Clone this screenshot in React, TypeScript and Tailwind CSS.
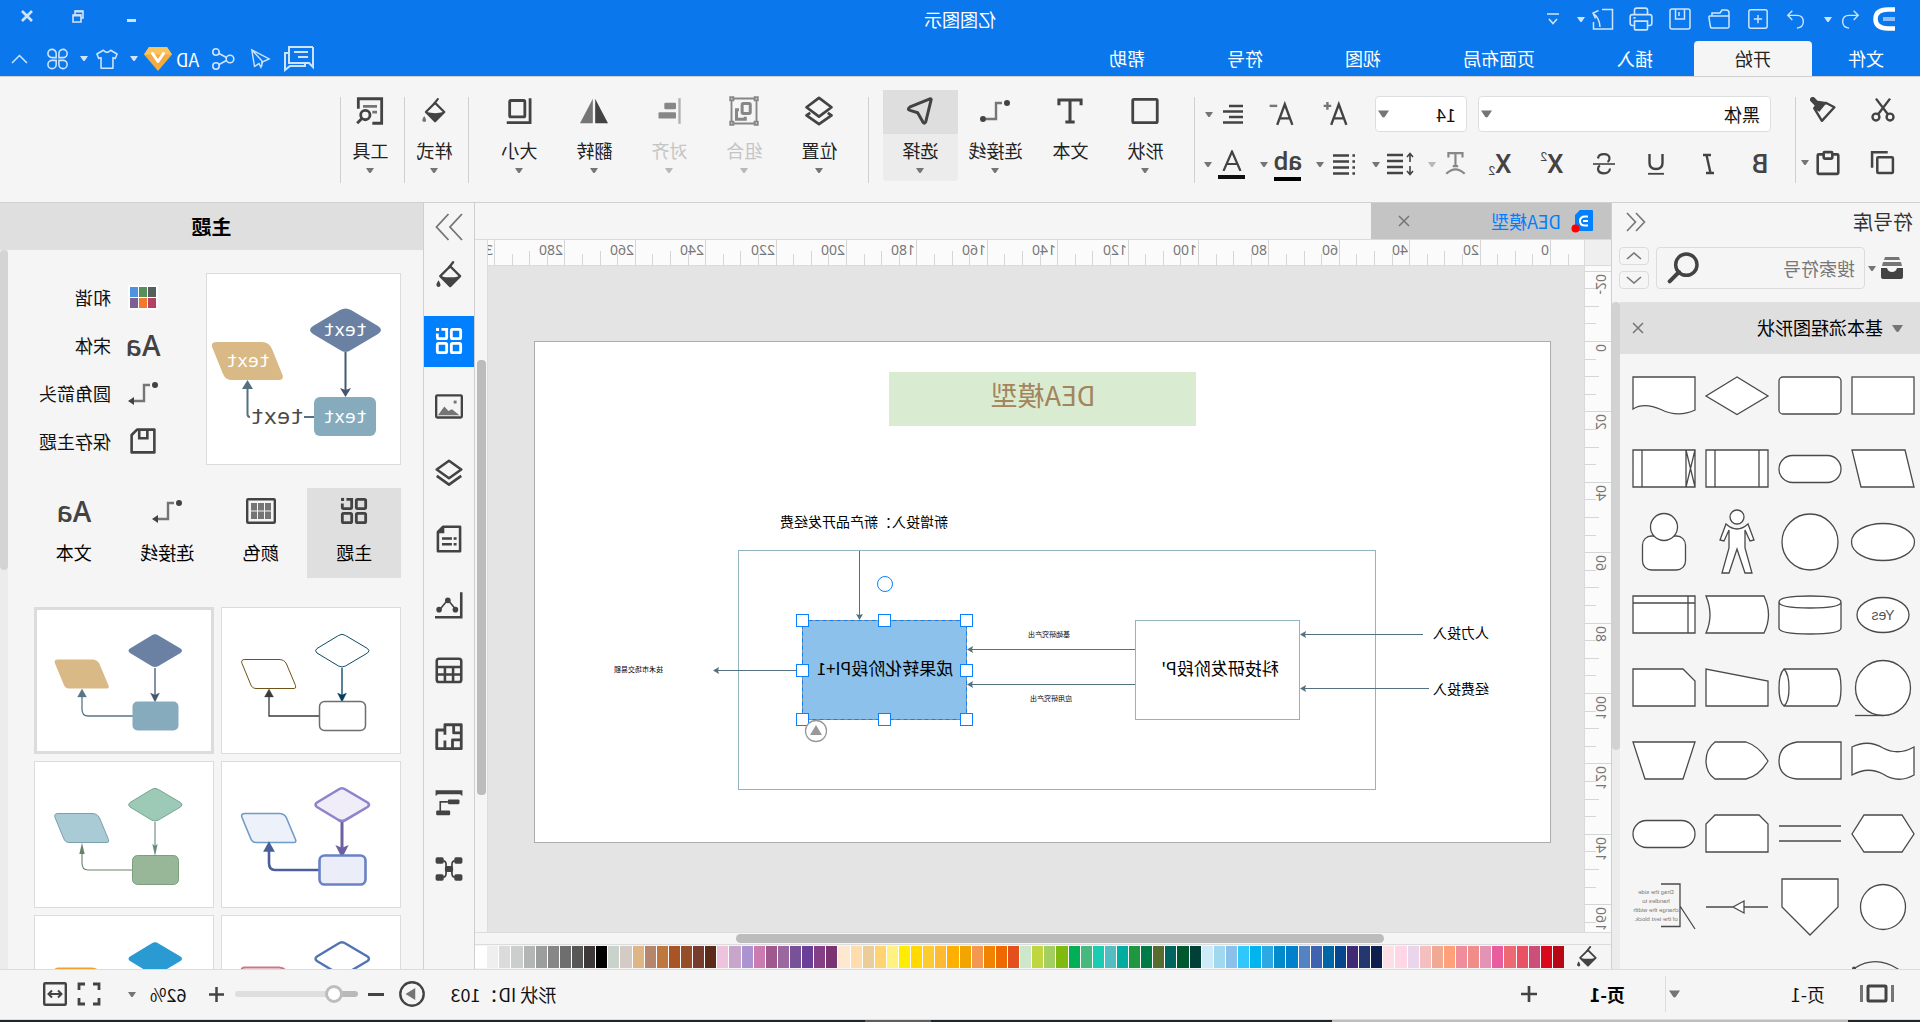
import React from "react";

type Kids = { children?: React.ReactNode };

/* ---------- primitives ---------- */

function Icon({
  size = 24,
  sw = 2,
  children,
  className = "",
}: Kids & { size?: number; sw?: number; className?: string }) {
  return (
    <svg
      width={size}
      height={size}
      viewBox="0 0 24 24"
      fill="none"
      stroke="currentColor"
      strokeWidth={sw}
      aria-hidden="true"
      className={"shrink-0 " + className}
    >
      {children}
    </svg>
  );
}

function Caret({ className = "text-[#757575]", w = 8, h = 5 }: { className?: string; w?: number; h?: number }) {
  return (
    <svg width={w} height={h} viewBox="0 0 8 5" className={"shrink-0 " + className} aria-hidden="true">
      <path d="M0 0H8L5 4.500Q4 5.500 3 4.500Z" fill="currentColor" />
    </svg>
  );
}

function Close({ size = 12, sw = 2 }: { size?: number; sw?: number }) {
  return (
    <svg width={size} height={size} viewBox="0 0 12 12" stroke="currentColor" strokeWidth={sw} aria-hidden="true">
      <path d="M1 1L11 11M11 1L1 11" />
    </svg>
  );
}

const fillStop = { fill: "currentColor", stroke: "none" } as const;

const Bucket = ({ size = 28, drop = "#434343" }: { size?: number; drop?: string }) => (
  <Icon size={size} sw={2}>
    <path d="M8.500 1L12 5.500" strokeLinecap="round" />
    <path d="M11 4.500L19.500 13L11 21.500L2.500 13Z" strokeLinejoin="round" />
    <path d="M3 13Q11 15 19 13L11 21.500Z" {...fillStop} />
    <path d="M21 16.500Q23.500 20 22.500 21.500Q21 23 19.500 21.500Q18.700 20 21 16.500Z" fill={drop} stroke="none" />
  </Icon>
);

const Tiles = ({ size = 28 }: { size?: number }) => (
  <Icon size={size} sw={2.4}>
    <rect x="2" y="2" width="8" height="8" rx="1" />
    <rect x="2" y="14" width="8" height="8" rx="1" />
    <rect x="14" y="14" width="8" height="8" rx="1" />
    <path d="M18.500 2H14V9Q14 10 15 10H21Q22 10 22 9V5.500" />
    <rect x="20.500" y="0.800" width="2.600" height="2.600" {...fillStop} />
  </Icon>
);

const Connector = ({ arrow = false }: { arrow?: boolean }) => (
  <svg width="32" height="28" viewBox="0 0 32 28" fill="none" aria-hidden="true">
    <circle cx="4" cy="6" r="3" fill="#434343" />
    <path d="M9 6H15V22H25" stroke="#757575" strokeWidth="2.400" />
    {arrow ? <path d="M25 18L31 22L25 26Z" fill="#434343" /> : <circle cx="28" cy="22" r="3" fill="#434343" />}
  </svg>
);

const Aa = () => <span className="font-['Open_Sans'] text-[28px] leading-7 font-semibold text-[#434343]">Aa</span>;

/* ---------- title bar ---------- */

function QuickAccess() {
  const b = "flex h-7 w-7 items-center justify-center";
  return (
    <div className="flex items-center pl-6 text-[#cfe4fc]">
      <svg width="24" height="26" viewBox="0 0 24 26" fill="none" aria-hidden="true">
        <path d="M1 3.500H8Q20.500 3.500 20.500 13T8 22.500H1" stroke="#fff" strokeWidth="4.500" />
        <path d="M1 13H13" stroke="#8dc0f8" strokeWidth="4" />
      </svg>
      <button aria-label="撤销" className={b + " ml-2"}>
        <Icon size={22} sw={1.5}>
          <path d="M8 3L3 8L8 13M3 8H13Q20 8 20 15Q20 21 13 22" />
        </Icon>
      </button>
      <button aria-label="撤销列表" className="flex w-4 justify-center">
        <Caret className="text-[#cfe4fc]" />
      </button>
      <button aria-label="重做" className={b + " ml-[10px]"}>
        <Icon size={22} sw={1.5}>
          <path d="M16 3L21 8L16 13M21 8H11Q4 8 4 15Q4 21 11 22" />
        </Icon>
      </button>
      <button aria-label="新建" className={b + " ml-[10px]"}>
        <Icon size={22} sw={1.6}>
          <rect x="2" y="2" width="20" height="20" rx="2" />
          <path d="M12 7.500V16.500M7.500 12H16.500" />
        </Icon>
      </button>
      <button aria-label="打开" className={b + " ml-[11px]"}>
        <Icon size={24} sw={1.5}>
          <path d="M2 20V6Q2 3 5 3H9L11 6H19V9M2 20V10Q2 9 3 9H21Q22.500 9 22 11L20.500 20Q20.300 21 19 21H4Q2 21 2 20" />
        </Icon>
      </button>
      <button aria-label="保存" className={b + " ml-[11px]"}>
        <Icon size={24} sw={1.5}>
          <rect x="2" y="2" width="20" height="20" rx="2" />
          <path d="M7.500 2V12H16.500V2M13 5V9" />
        </Icon>
      </button>
      <button aria-label="打印" className={b + " ml-[11px]"}>
        <Icon size={26} sw={1.500}>
          <path d="M6 8V4Q6 2 8 2H16Q18 2 18 4V8M6 18H4Q2 18 2 16V10Q2 8 4 8H20Q22 8 22 10V16Q22 18 20 18H18M6 14H18V21Q18 22 17 22H7Q6 22 6 21ZM17 11H19" />
        </Icon>
      </button>
      <button aria-label="导出" className={b + " ml-[10px]"}>
        <Icon size={24} sw={1.500}>
          <path d="M13 2.500H2.500V22H21.500V15M15 20Q15.500 11 21.500 6.500M16.500 3.500L22 6L19.500 11.500" />
        </Icon>
      </button>
      <button aria-label="导出列表" className="flex w-4 justify-center">
        <Caret className="text-[#cfe4fc]" />
      </button>
      <button aria-label="自定义" className={b + " ml-[6px]"}>
        <svg width="12" height="12" viewBox="0 0 12 12" fill="none" stroke="currentColor" strokeWidth="1.600">
          <path d="M0 1H12M2 6L6 10.500L10 6" />
        </svg>
      </button>
    </div>
  );
}

function TitleBar() {
  const menu = ["文件", "开始", "插入", "页面布局", "视图", "符号", "帮助"];
  return (
    <header className="bg-[#0a78ec] text-white">
      <div className="grid h-[41px] grid-cols-[1fr_auto_1fr]">
        <div className="flex pt-1">
          <div className="flex h-[30px]">
            <QuickAccess />
          </div>
        </div>
        <h1 className="pt-[9px] text-lg leading-5">亿图图示</h1>
        <div className="flex h-8 items-center justify-end pr-[17px] text-[#cfe4fc]">
          <button aria-label="最小化" className="flex h-8 w-[53px] items-center justify-center pt-2">
            <span className="h-[3px] w-[9px] bg-current" />
          </button>
          <button aria-label="还原" className="flex h-8 w-[53px] items-center justify-center">
            <svg width="12" height="13" viewBox="0 0 12 13" fill="none" stroke="currentColor" strokeWidth="1.600">
              <path d="M3 5V12H11V5ZM3 8H1V1H9V5" />
              <path d="M1 1.600H9M3 5.600H11" strokeWidth="2" />
            </svg>
          </button>
          <button aria-label="关闭" className="ml-[15px] flex h-8 w-5 items-center justify-center">
            <Close size={12} sw={2.6} />
          </button>
        </div>
      </div>
      <div className="flex h-[35px] items-stretch justify-between">
        <nav className="flex text-lg leading-none">
          {menu.map((m, i) => (
            <button
              key={m}
              className={
                i === 0
                  ? "px-9 pb-[2px]"
                  : i === 1
                    ? "rounded-t-sm bg-[#f5f5f5] px-[41px] pb-[2px] text-[#222]"
                    : "px-[41px] pb-[2px]"
              }
            >
              {m}
            </button>
          ))}
        </nav>
        <div className="flex items-center pr-[11px] text-[#cfe4fc]">
          <button aria-label="评论">
            <svg width="30" height="26" viewBox="0 0 30 26" fill="none" stroke="currentColor" strokeWidth="2">
              <path d="M1 1H25V17H21M25 7H29V24L24 20H9V17M1 1V21L5 17H21M6 6H20M6 11H16" />
            </svg>
          </button>
          <button aria-label="发送" className="ml-[13px]">
            <Icon size={22} sw={1.500}>
              <path d="M21 2L2 12L9 15L11 21L13 17L18 20ZM21 2L10 14V20" />
            </Icon>
          </button>
          <button aria-label="分享" className="ml-[14px]">
            <Icon size={24} sw={1.600}>
              <circle cx="5" cy="12" r="3.800" />
              <circle cx="19" cy="5" r="3.200" />
              <circle cx="19" cy="19" r="3.200" />
              <path d="M8.500 10.500L16 6.500M8.500 13.500L16 17.500" />
            </Icon>
          </button>
          <a href="#vip" className="ml-3 flex items-center gap-1 text-lg leading-none text-white">
            AD
            <svg width="28" height="24" viewBox="0 0 28 24" aria-hidden="true">
              <path d="M5 0H23L28 7.500L14 24L0 7.500Z" fill="#f2ab3c" />
              <path d="M5 0H23L28 7.500H0Z" fill="#fbc35c" />
              <path d="M8.500 6.500L14 14.500L19.500 6.500" fill="none" stroke="#fff" strokeWidth="3" strokeLinecap="round" strokeLinejoin="round" />
            </svg>
          </a>
          <button aria-label="会员" className="ml-[6px]">
            <Caret className="text-[#cfe4fc]" />
          </button>
          <button aria-label="皮肤" className="ml-3">
            <Icon size={22} sw={1.700}>
              <path d="M8 2.500Q12 7 16 2.500L23 6.500L21 11.500L18.500 10.500V22H5.500V10.500L3 11.500L1 6.500Z" strokeLinejoin="round" />
            </Icon>
          </button>
          <button aria-label="皮肤列表" className="ml-2">
            <Caret className="text-[#cfe4fc]" />
          </button>
          <button aria-label="应用" className="ml-[11px]">
            <Icon size={22} sw={1.700}>
              <path d="M11 10.500H6A4.500 4.500 0 1 1 11 6ZM14 10.500H18.500A4.500 4.500 0 1 0 14 6ZM11 13.500H6A4.500 4.500 0 1 0 11 18ZM14 13.500H18.500A4.500 4.500 0 1 1 14 18Z" />
            </Icon>
          </button>
          <button aria-label="折叠" className="ml-[19px]">
            <svg width="17" height="10" viewBox="0 0 17 10" fill="none" stroke="currentColor" strokeWidth="1.500">
              <path d="M1 9L8.500 1.500L16 9" />
            </svg>
          </button>
        </div>
      </div>
    </header>
  );
}

/* ---------- ribbon ---------- */

const Sep = () => <div className="h-[86px] w-px self-start bg-[#d0d0d0]" />;

function RibbonTool({
  label,
  icon,
  caret = true,
  active = false,
  disabled = false,
}: {
  label: string;
  icon: React.ReactNode;
  caret?: boolean;
  active?: boolean;
  disabled?: boolean;
}) {
  return (
    <button
      disabled={disabled}
      className={
        "flex h-[91px] w-[75px] flex-col items-center rounded-sm " +
        (active ? "bg-[#ececec] " : "") +
        (disabled ? "text-[#c4c4c4]" : "text-[#222]")
      }
    >
      <span
        className={
          "flex h-11 w-full shrink-0 items-center justify-center pb-[2px] " +
          (active ? "bg-[#dedede] " : "") +
          (disabled ? "text-[#878787]" : "text-[#434343]")
        }
      >
        {icon}
      </span>
      <span className="flex h-[34px] items-center pb-[3px] text-lg leading-none whitespace-nowrap">{label}</span>
      {caret && <Caret className={disabled ? "text-[#b8b8b8]" : "text-[#757575]"} />}
    </button>
  );
}

function FormatBtn({ label, children, wide = false, dim = false }: Kids & { label: string; wide?: boolean; dim?: boolean }) {
  if (!wide)
    return (
      <button aria-label={label} className="flex h-9 w-[52px] shrink-0 items-center justify-center text-[#434343]">
        {children}
      </button>
    );
  return (
    <button
      aria-label={label}
      className={"flex h-9 w-14 shrink-0 items-center gap-[6px] " + (dim ? "text-[#878787]" : "text-[#434343]")}
    >
      <span className="flex w-7 justify-center">{children}</span>
      <Caret className={dim ? "text-[#b8b8b8]" : "text-[#757575]"} />
    </button>
  );
}

const Glyph = ({ children, className = "" }: Kids & { className?: string }) => (
  <span className={"font-['Roboto'] text-[26px] leading-none font-medium " + className}>{children}</span>
);

function PickBox({ label, value, options, className }: { label: string; value: string; options: string[]; className: string }) {
  return (
    <div className={"relative h-9 shrink-0 " + className}>
      <select
        aria-label={label}
        defaultValue={value}
        className="h-9 w-full appearance-none rounded-sm border border-[#dcdfe2] bg-white pl-[10px] text-lg leading-8 text-[#111]"
      >
        {options.map((o) => (
          <option key={o}>{o}</option>
        ))}
      </select>
      <span className="pointer-events-none absolute inset-y-0 right-[3px] flex items-center">
        <Caret w={11} h={8} />
      </span>
    </div>
  );
}

function Ribbon() {
  return (
    <section aria-label="开始" className="flex h-[127px] shrink-0 border-y border-[#d0d0d0] bg-[#f5f5f5]">
      <div className="grid h-[112px] w-[124px] grid-cols-[74px_50px] grid-rows-2 pt-[6px] text-[#434343]">
        <button aria-label="剪切" className="flex items-center justify-center">
          <Icon size={26} sw={2.2}>
            <circle cx="5.500" cy="18.500" r="3.200" />
            <circle cx="18.500" cy="18.500" r="3.200" />
            <path d="M5.500 1.500L16.500 16M18.500 1.500L7.500 16" />
          </Icon>
        </button>
        <button aria-label="格式刷" className="flex items-center justify-center pr-1">
          <Icon size={26} sw={2.2}>
            <path d="M17.500 6.500L21.500 2.500" strokeWidth="5" strokeLinecap="round" />
            <path d="M9 5.500L20 10.500L13 22L1.500 9.500Z" strokeLinejoin="round" />
            <path d="M9 5L17 4L20.500 10.500L15.500 13Z" strokeLinejoin="round" strokeWidth="1" fill="currentColor" />
          </Icon>
        </button>
        <button aria-label="复制" className="flex items-center justify-center">
          <Icon size={25} sw={2.4}>
            <path d="M7 2.200H22V17" />
            <rect x="2" y="7" width="15" height="15" rx="1" />
          </Icon>
        </button>
        <button aria-label="粘贴" className="flex items-center gap-[6px] pl-[5px]">
          <Icon size={26} sw={2.4}>
            <path d="M8 4H3.500Q2.500 4 2.500 5V21Q2.500 22 3.500 22H20.500Q21.500 22 21.500 21V5Q21.500 4 20.500 4H16" />
            <rect x="8" y="2" width="8" height="6" rx="1" />
          </Icon>
          <Caret />
        </button>
      </div>
      <div className="flex pt-5">
        <Sep />
      </div>
      <div className="flex w-[600px] flex-col pt-[19px] pl-[9px]">
        <div className="flex h-9 items-center">
          <PickBox label="字体" value="黑体" options={["黑体", "宋体"]} className="ml-[15px] w-[293px]" />
          <PickBox label="字号" value="14" options={["12", "14", "16"]} className="ml-[11px] w-[92px]" />
          <button aria-label="增大字号" className="ml-[13px] flex h-9 w-[54px] shrink-0 items-center justify-center text-[#434343]">
            <Icon size={26} sw={2.2}>
              <path d="M1.500 22L8.500 3L15.500 22M4 16H13" />
              <path d="M19 1V8M15.500 4.500H22.500" stroke="#757575" />
            </Icon>
          </button>
          <button aria-label="减小字号" className="flex h-9 w-[54px] shrink-0 items-center justify-center text-[#434343]">
            <Icon size={26} sw={2.2}>
              <path d="M1.500 22L8.500 3L15.500 22M4 16H13" />
              <path d="M15.500 4.500H22.500" stroke="#757575" />
            </Icon>
          </button>
          <div className="ml-[7px] flex">
            <FormatBtn label="对齐" wide>
              <Icon size={24} sw={2.6}>
                <path d="M2 4H16M2 9.500H22M2 15H16M2 20.500H22" />
              </Icon>
            </FormatBtn>
          </div>
        </div>
        <div className="mt-[14px] flex h-9 items-center">
          <FormatBtn label="加粗">
            <Glyph className="font-bold">B</Glyph>
          </FormatBtn>
          <FormatBtn label="倾斜">
            <Icon size={24} sw={2.4}>
              <path d="M9 3H17M6 21H14M13.500 3L9.500 21" />
            </Icon>
          </FormatBtn>
          <FormatBtn label="下划线">
            <Icon size={24} sw={2.4}>
              <path d="M5.500 2V11Q5.500 17 12 17T18.500 11V2" />
              <path d="M4 21.800H20" strokeWidth="1.800" />
            </Icon>
          </FormatBtn>
          <FormatBtn label="删除线">
            <Icon size={24} sw={2.2}>
              <path d="M18 6.500Q17.500 2.200 12 2.200T6.500 6.500Q6.500 9 8.500 10M6 16.500Q6.500 21.300 12 21.300T18 17Q18 14.500 16 13.500" />
              <path d="M1 12H23" strokeWidth="1.600" />
            </Icon>
          </FormatBtn>
          <FormatBtn label="上标">
            <span className="flex items-start">
              <Glyph>X</Glyph>
              <span className="font-['Roboto'] text-xs leading-none">2</span>
            </span>
          </FormatBtn>
          <FormatBtn label="下标">
            <span className="flex items-end">
              <Glyph>X</Glyph>
              <span className="font-['Roboto'] text-xs leading-none">2</span>
            </span>
          </FormatBtn>
          <div className="ml-1 flex">
            <FormatBtn label="文字方向" wide dim>
              <Icon size={26} sw={2}>
                <path d="M6 6V2H19V6M12.500 2V14M10 14H15M4 21Q12.500 13 21 21" />
              </Icon>
            </FormatBtn>
            <FormatBtn label="行距" wide>
              <svg width="28" height="26" viewBox="0 0 28 26" fill="none" stroke="currentColor" strokeWidth="2.600">
                <path d="M11 4H27M11 10H27M11 16H27M11 22H27" />
                <path d="M4 3V11M1 6L4 2.500L7 6M4 15V23M1 20L4 23.500L7 20" strokeWidth="1.600" />
              </svg>
            </FormatBtn>
            <FormatBtn label="项目符号" wide>
              <Icon size={24} sw={2.6}>
                <path d="M7 3.500H23M7 9.500H23M7 15.500H23M7 21.500H23M1 3.500H3.600M1 9.500H3.600M1 15.500H3.600M1 21.500H3.600" />
              </Icon>
            </FormatBtn>
            <FormatBtn label="突出显示" wide>
              <span className="flex flex-col items-center">
                <Glyph className="leading-[22px]">ab</Glyph>
                <span className="mt-[3px] h-1 w-[27px] bg-black" />
              </span>
            </FormatBtn>
            <FormatBtn label="字体颜色" wide>
              <span className="flex flex-col items-center">
                <svg width="20" height="21" viewBox="0 0 20 21" fill="none" stroke="currentColor" strokeWidth="2.200">
                  <path d="M1.500 21L10 1.500L18.500 21M5 14H15" />
                </svg>
                <span className="mt-1 h-1 w-[27px] bg-[#111]" />
              </span>
            </FormatBtn>
          </div>
        </div>
      </div>
      <div className="flex pt-5">
        <Sep />
      </div>
      <div className="flex pt-[13px] pl-[11px]">
        <RibbonTool
          label="形状"
          icon={
            <Icon size={28} sw={2.4}>
              <rect x="1.500" y="2" width="21" height="20" rx="1" />
            </Icon>
          }
        />
        <RibbonTool
          label="文本"
          caret={false}
          icon={
            <Icon size={28} sw={2.6}>
              <path d="M2.500 7V2.500H21.500V7M12 2.500V21.500M8 21.500H16" />
            </Icon>
          }
        />
        <RibbonTool label="连接线" icon={<Connector />} />
        <RibbonTool
          label="选择"
          active
          icon={
            <Icon size={28} sw={2.6}>
              <path d="M2.500 2.500Q2 1.500 3.500 1.600L20.500 8.500Q23.500 10.500 20.500 11.500L14 13.500L9.500 21.500Q8 23.500 7 21Z" strokeLinejoin="round" />
            </Icon>
          }
        />
      </div>
      <div className="flex pt-5 pl-[14px]">
        <Sep />
      </div>
      <div className="flex pt-[13px] pl-[11px]">
        <RibbonTool
          label="位置"
          icon={
            <Icon size={30} sw={2.2}>
              <path d="M12 1.500L22 9L12 16.500L2 9Z" strokeLinejoin="round" />
              <path d="M5 13.500L2 15.500L12 22.500L22 15.500L19 13.500" strokeLinejoin="round" />
            </Icon>
          }
        />
        <RibbonTool
          label="组合"
          disabled
          icon={
            <Icon size={30} sw={1.5}>
              <path d="M2 3V21M22 3V21M3 2H21M3 22H21" />
              <path d="M1 1H3.500V3.500H1ZM20.500 1H23V3.500H20.500ZM1 20.500H3.500V23H1ZM20.500 20.500H23V23H20.500Z" />
              <rect x="7" y="6" width="6.500" height="8" rx="1" strokeWidth="2.400" />
              <path d="M16 11H18V18.500H11V16.500" strokeWidth="2.400" />
            </Icon>
          }
        />
        <RibbonTool
          label="对齐"
          disabled
          icon={
            <Icon size={28}>
              <path d="M3 1V23" stroke="#b0b0b0" />
              <rect x="6" y="5" width="10" height="5.500" rx="1" {...fillStop} />
              <rect x="6" y="13" width="15" height="5.500" rx="1" {...fillStop} />
            </Icon>
          }
        />
        <RibbonTool
          label="翻转"
          icon={
            <Icon size={28}>
              <path d="M11 1.500V22.500H0Z" {...fillStop} />
              <path d="M13 1.500V22.500H24Z" fill="#757575" stroke="none" />
            </Icon>
          }
        />
        <RibbonTool
          label="大小"
          icon={
            <Icon size={28} sw={2.4}>
              <rect x="7" y="3" width="13" height="14" rx="1" />
              <path d="M2.500 1V22H22.500" />
            </Icon>
          }
        />
      </div>
      <div className="flex pt-5 pl-[13px]">
        <Sep />
      </div>
      <div className="flex w-[63px] justify-center pt-[13px]">
        <div className="-mr-1 flex">
          <RibbonTool label="样式" icon={<Bucket size={26} drop="#757575" />} />
        </div>
      </div>
      <div className="flex pt-5">
        <Sep />
      </div>
      <div className="flex w-[63px] justify-center pt-[13px]">
        <div className="-mr-1 flex">
          <RibbonTool
            label="工具"
            icon={
              <Icon size={28} sw={2.4}>
                <path d="M10 22.500H2V1.500H22V10" />
                <path d="M6 8H18M6 13H10" stroke="#757575" />
                <circle cx="16" cy="15.500" r="4" />
                <path d="M19 18.500L23 22.500" />
              </Icon>
            }
          />
        </div>
      </div>
      <div className="flex pt-5">
        <Sep />
      </div>
    </section>
  );
}

/* ---------- symbol library ---------- */

const W = "#fff";
const shapes: { name: string; art: React.ReactNode }[] = [
  { name: "流程", art: <rect x="-31" y="-19" width="62" height="37" /> },
  { name: "圆角矩形", art: <rect x="-31" y="-19" width="62" height="37" rx="4" /> },
  { name: "判定", art: <path d="M0-19L31 0L0 18.500L-31 0Z" /> },
  { name: "文档", art: <path d="M-31-19H31V13Q20 6 3 13.500Q-14 22-31 14Z" /> },
  { name: "数据", art: <path d="M-22-19H31L22 18H-31Z" /> },
  { name: "终止符", art: <rect x="-31" y="-13.500" width="62" height="27" rx="13.500" /> },
  { name: "预定义流程", art: <path d="M-31-19H31V18H-31ZM-22-19V18M22-19V18" /> },
  { name: "子流程", art: <path d="M-31-19H31V18H-31ZM-22-19V18M22-19V18M-31-19L-22 18M-22-19L-31 18" /> },
  { name: "椭圆", art: <ellipse rx="31.500" ry="18.500" /> },
  { name: "圆", art: <circle r="28" /> },
  {
    name: "人",
    art: (
      <>
        <path d="M-11-18Q0-8 11-18L17-2L13-1L8-12V6L15 31H8L0 7L-8 31H-15L-8 6V-12L-13-1L-17-2Z" />
        <circle cy="-25" r="7" />
      </>
    ),
  },
  {
    name: "用户",
    art: (
      <>
        <rect x="-21.500" y="-6" width="43" height="34" rx="9" />
        <circle cy="-15" r="13.500" />
      </>
    ),
  },
  {
    name: "是",
    art: (
      <>
        <ellipse rx="26" ry="17.500" />
        <text y="5" textAnchor="middle" stroke="none" fill="#555" className="font-['Liberation_Sans'] text-sm">
          Yes
        </text>
      </>
    ),
  },
  { name: "数据库", art: <path d="M-31-13V13Q-31 19 0 19T31 13V-13Q31-19 0-19T-31-13Q-31-7 0-7T31-13" /> },
  { name: "存储数据", art: <path d="M-27-19H31Q23 0 31 18H-27Q-36 0-27-19Z" /> },
  { name: "内部存储", art: <path d="M-31-19H31V18H-31ZM-24-19V18M-31-12H31" /> },
  {
    name: "顺序数据",
    art: (
      <>
        <circle r="27.500" />
        <path d="M0 27.500H28" />
      </>
    ),
  },
  { name: "直接数据", art: <path d="M26-19H-27Q-31-14-31 0T-27 18H26Q31 14 31 0T26-19Q21-14 21 0T26 18" /> },
  { name: "手动输入", art: <path d="M31-19V18H-31V-7Z" /> },
  { name: "卡片", art: <path d="M-19-19H31V18H-31V-7Z" /> },
  { name: "纸带", art: <path d="M-31-14Q-15-5 0-13Q15-22 31-14V14Q15 5 0 13Q-15 23-31 14Z" /> },
  { name: "延期", art: <path d="M-31-19H13Q31-16 31 0T13 18H-31Z" /> },
  { name: "显示", art: <path d="M-31 0Q-22-15-9-19H22Q31-12 31 0T22 18H-9Q-22 15-31 0Z" /> },
  { name: "手动操作", art: <path d="M-31-19H31L19 18H-19Z" /> },
  { name: "准备", art: <path d="M-19-19H19L31 0L19 18H-19L-31 0Z" /> },
  { name: "并行模式", art: <path d="M-31-8H31M-31 7H31" /> },
  { name: "循环限制", art: <path d="M-22-19H22L31-10V18H-31V-10Z" /> },
  { name: "起止", art: <rect x="-31" y="-13.500" width="62" height="27" rx="13.500" /> },
  { name: "连接点", art: <circle r="22.500" /> },
  { name: "离页引用", art: <path d="M-28-28H28V0L0 28L-28 0Z" /> },
  { name: "控制传递", art: <path d="M-31 0H-7M4 0H31M-7-6L4 0L-7 6Z" /> },
  {
    name: "批注",
    art: (
      <>
        <path d="M3-23H-16V19.500H3M-16-1L-31 22" fill="none" />
        <g stroke="none" fill="#777" textAnchor="middle" className="font-['Liberation_Sans'] text-[6px]">
          <text x="8" y="-13">Drag the side</text>
          <text x="8" y="-4">handles to</text>
          <text x="8" y="5">change the width</text>
          <text x="8" y="14">of the text block.</text>
        </g>
      </>
    ),
  },
  {
    name: "弧线",
    art: (
      <>
        <path d="M-18-9Q6-26 28-12" fill="none" />
        <circle cx="29" cy="-11.500" r="2" fill="#4a4a4a" stroke="none" />
      </>
    ),
  },
];

function SymbolPanel() {
  return (
    <aside className="flex w-[309px] shrink-0 flex-col border-r border-[#cfcfcf] bg-[#f5f5f5]">
      <div className="flex h-9 shrink-0 items-center justify-between pt-[2px] pr-[14px] pl-[7px]">
        <h2 className="text-xl leading-none text-[#333]">符号库</h2>
        <button aria-label="收起" className="text-[#757575]">
          <svg width="20" height="20" viewBox="0 0 20 20" fill="none" stroke="currentColor" strokeWidth="1.600">
            <path d="M10 1L1.500 10L10 19M19 1L10.500 10L19 19" />
          </svg>
        </button>
      </div>
      <div className="flex h-[63px] shrink-0 items-start pt-2 pl-[17px]">
        <button aria-label="符号库列表" className="flex h-[42px] items-center gap-[5px] text-[#434343]">
          <svg width="22" height="22" viewBox="0 0 22 22" aria-hidden="true">
            <path d="M4 0H18L19 3H3ZM2 5H20L21 9H1Z" fill="#757575" />
            <path d="M0 11H6Q7 15 11 15T16 11H22V20Q22 22 20 22H2Q0 22 0 20Z" fill="currentColor" />
          </svg>
          <Caret />
        </button>
        <div className="ml-[3px] flex h-[42px] w-[209px] items-center rounded-sm border border-[#dcdcdc] pr-[10px]">
          <input
            aria-label="搜索符号"
            placeholder="搜索符号"
            className="w-full min-w-0 flex-1 bg-transparent pl-[9px] text-lg leading-8 outline-none placeholder:text-[#777]"
          />
          <button aria-label="搜索" className="text-[#434343]">
            <Icon size={32} sw={2.6}>
              <circle cx="9.500" cy="9.500" r="8" />
              <path d="M15 15L22 22" strokeLinecap="round" strokeWidth="3" />
            </Icon>
          </button>
        </div>
        <div className="ml-[7px] flex flex-col gap-[6px]">
          {["M1 7L8 1L15 7", "M1 1L8 7L15 1"].map((d, i) => (
            <button
              key={d}
              aria-label={i ? "下移" : "上移"}
              className="flex h-[18px] w-[30px] items-center justify-center rounded-sm border border-[#dcdcdc] text-[#757575]"
            >
              <svg width="16" height="8" viewBox="0 0 16 8" fill="none" stroke="currentColor" strokeWidth="1.600">
                <path d={d} />
              </svg>
            </button>
          ))}
        </div>
      </div>
      <div className="flex min-h-0 flex-1">
        <div className="min-w-0 flex-1 overflow-hidden">
          <div className="flex h-[52px] items-center bg-[#dfdfdf] pr-3 pl-[17px]">
            <Caret w={11} h={9} />
            <h3 className="ml-[9px] pb-[2px] text-lg leading-none text-black">基本流程图形状</h3>
            <button aria-label="关闭符号库" className="ml-auto text-[#757575]">
              <Close size={12} sw={1.5} />
            </button>
          </div>
          <div className="grid w-[292px] grid-cols-4 pt-[5px]">
            {shapes.map((s) => (
              <button key={s.name} aria-label={s.name} className="h-[73px]">
                <svg
                  width="73"
                  height="73"
                  viewBox="-37 -37 73 73"
                  fill={W}
                  stroke="#4a4a4a"
                  strokeWidth="1.300"
                >
                  {s.art}
                </svg>
              </button>
            ))}
          </div>
        </div>
        <div className="w-2 bg-[#ececec]">
          <div className="h-[448px] rounded-full bg-[#d2d2d2]" />
        </div>
      </div>
    </aside>
  );
}

/* ---------- canvas ---------- */

function HRuler() {
  const marks = Array.from({ length: 68 }, (_, i) => i - 1);
  return (
    <svg width="100%" height="25" className="block bg-[#fbfbfb]" aria-hidden="true">
      {marks.map((i) => {
        const x = Math.round(33 + i * 17.6);
        const major = i % 4 === 0;
        return (
          <g key={i}>
            <path d={`M${x + 0.5} ${major ? 0 : i % 2 === 0 ? 11 : 14}V25`} stroke="#d6d6d6" />
            {major && (
              <text x={x + 2} y="15" fill="#777" className="font-['Noto_Sans'] text-sm">
                {i * 5}
              </text>
            )}
          </g>
        );
      })}
    </svg>
  );
}

function VRuler() {
  const marks = Array.from({ length: 60 }, (_, i) => i - 4);
  return (
    <svg width="26" height="100%" className="block bg-[#fbfbfb]" aria-hidden="true">
      {marks.map((i) => {
        const y = Math.round(75 + i * 17.6);
        const major = i % 4 === 0;
        return (
          <g key={i}>
            <path d={`M${major ? 0 : i % 2 === 0 ? 12 : 15} ${y + 0.5}H26`} stroke="#d6d6d6" />
            {major && (
              <text
                transform={`translate(15 ${y + 3}) rotate(-90)`}
                textAnchor="end"
                fill="#777"
                className="font-['Noto_Sans'] text-sm"
              >
                {i * 5}
              </text>
            )}
          </g>
        );
      })}
    </svg>
  );
}

function Flow({ d, tip, dir }: { d: string; tip: [number, number]; dir: "r" | "d" }) {
  const [x, y] = tip;
  return (
    <>
      <path d={d} stroke="#55707e" fill="none" />
      <path
        d={dir === "r" ? `M${x} ${y}L${x - 6} ${y - 3.5}L${x - 5} ${y}L${x - 6} ${y + 3.5}Z` : `M${x} ${y}L${x - 3.5} ${y - 6}L${x} ${y - 5}L${x + 3.5} ${y - 6}Z`}
        fill="#55707e"
      />
    </>
  );
}

function Diagram() {
  const handles = [953.5, 1035.5, 1117.5].flatMap((x) => [620.5, 670.5, 719.5].map((y) => [x, y]));
  return (
    <svg width="100%" height="100%" className="block" role="img" aria-label="DEA模型">
      <g transform="translate(-336 -266)">
        <rect x="369.500" y="341.500" width="1016" height="501" fill="#fff" stroke="#adadad" />
        <rect x="724" y="372" width="307" height="54" fill="#d9ecd1" />
        <text x="877" y="406" textAnchor="middle" fill="#a3845c" className="text-[27px]">
          DEA模型
        </text>
        <text x="972" y="527" className="text-sm">
          新增投入：新产品开发经费
        </text>
        <rect x="544.500" y="550.500" width="637" height="239" fill="none" stroke="#93b2c2" />
        <rect x="620.500" y="620.500" width="164" height="99" fill="#fff" stroke="#93b2c2" />
        <rect x="953.500" y="620.500" width="164" height="99" fill="#8bc1ea" stroke="#8a9298" />
        <Flow d="M497 634.500H618" tip={[620, 634.5]} dir="r" />
        <Flow d="M491 688.500H618" tip={[620, 688.5]} dir="r" />
        <Flow d="M785 649.500H950" tip={[953, 649.5]} dir="r" />
        <Flow d="M785 684.500H950" tip={[953, 684.5]} dir="r" />
        <Flow d="M1118 670.500H1204" tip={[1207, 670.5]} dir="r" />
        <Flow d="M1060.500 551V618" tip={[1060.5, 620]} dir="d" />
        <text x="431" y="638" className="text-sm">人力投入</text>
        <text x="431" y="694" className="text-sm">经费投入</text>
        <text x="700" y="675" textAnchor="middle" className="text-[17px]">科技研发阶段P'</text>
        <text x="1035" y="675" textAnchor="middle" className="text-[17px]">成果转化阶段PI+1</text>
        <text x="850" y="637" className="text-[7px]">基础研究产出</text>
        <text x="848" y="701" className="text-[7px]">应用研究产出</text>
        <text x="1257" y="672" className="text-[7px]">技术市场交易额</text>
        <rect x="953.500" y="620.500" width="164" height="99" fill="none" stroke="#0a80ff" strokeDasharray="4 3" />
        {handles
          .filter(([x, y]) => !(x === 1035.5 && y === 670.5))
          .map(([x, y]) => (
            <rect key={`${x}-${y}`} x={x - 6} y={y - 6} width="12" height="12" fill="#fff" stroke="#0a80ff" />
          ))}
        <circle cx="1035" cy="584" r="7.500" fill="#fff" stroke="#0a80ff" />
        <circle cx="1104" cy="731" r="10.500" fill="#fff" stroke="#999" strokeWidth="1.300" />
        <path d="M1104 725L1110 735H1098Z" fill="#999" />
      </g>
    </svg>
  );
}

const palette = [
  "#b70816", "#d9091b", "#cb4f79", "#ea5163", "#ed6a72", "#e75d9e", "#e394b5", "#f08d88", "#f08d9a", "#ffa078",
  "#f0a992", "#f6bfbf", "#ead6ea", "#ffd6e6", "#ffdfe6", "#0e1f4e", "#24386f", "#402a76", "#06468f", "#0067a6",
  "#3f63b0", "#5582c3", "#0080cd", "#008bcd", "#2ca8e3", "#00b4f0", "#30c8fa", "#8ac1ea", "#a0d8f0", "#cfebf7",
  "#004037", "#00582f", "#00645f", "#566d2f", "#007b47", "#1f9740", "#00ad9e", "#53bdc2", "#1bcbb2", "#48b97e",
  "#00af56", "#80b910", "#a3cf62", "#c0d641", "#cce7c9", "#e44f1e", "#ee6900", "#f08300", "#f39850", "#f2a500",
  "#ffaf00", "#ffb933", "#fccb2f", "#ffd900", "#ffec00", "#fff280", "#ffd470", "#eacd98", "#ffdcab", "#fee8d0",
  "#7b3372", "#853f87", "#6a3f97", "#785298", "#9a679f", "#9f598c", "#cc7bb0", "#aa93d0", "#c8a5cb", "#eec3dd",
  "#5c2a18", "#783c2e", "#954e28", "#a85426", "#be773f", "#b5866c", "#deb685", "#d5cbc5", "#cad3cb", "#000000",
  "#3e3838", "#585656", "#6e6e6e", "#878787", "#9c9e9d", "#b3b6b5", "#cbcecd", "#dadbda", "#eeefee", "#ffffff",
];

function Workspace() {
  return (
    <main className="flex min-w-0 flex-1 flex-col bg-[#f5f5f5]">
      <div className="flex h-[37px] shrink-0 border-b border-[#dadada]">
        <div className="flex w-60 items-center bg-[#c4c4c4] pr-[27px] pl-[17px]">
          <svg width="23" height="23" viewBox="0 0 23 23" aria-hidden="true">
            <path d="M1 1Q1 0 2 0H14L19 5V20Q19 21 18 21H2Q1 21 1 20Z" fill="#0080ff" />
            <path d="M6 6.500H9Q14 6.500 14 11T9 15.500H6M6 11H11" stroke="#fff" strokeWidth="2" fill="none" />
            <circle cx="18.500" cy="18.500" r="4" fill="#f00" />
          </svg>
          <span className="ml-[10px] text-lg leading-none text-[#0080ff]">DEA模型</span>
          <button aria-label="关闭文档" className="ml-auto text-[#757575]">
            <Close size={12} sw={1.5} />
          </button>
        </div>
      </div>
      <div className="flex min-h-0 flex-1">
        <div className="grid min-h-0 min-w-0 flex-1 grid-cols-[27px_1fr] grid-rows-[26px_1fr]">
          <div className="border-r border-b border-[#dadada] bg-[#efefef]" />
          <div className="overflow-hidden border-b border-[#dadada]">
            <HRuler />
          </div>
          <div className="overflow-hidden border-r border-[#dadada]">
            <VRuler />
          </div>
          <div className="overflow-hidden bg-[#e4e4e4]">
            <Diagram />
          </div>
        </div>
        <div className="w-[13px] shrink-0 border-l border-[#dcdcdc] pt-[120px] pr-[2px] pl-px">
          <div className="h-[435px] rounded bg-[#bcbcbc]" />
        </div>
      </div>
      <div className="flex h-[13px] shrink-0 items-center border-y border-[#dcdcdc]">
        <div className="ml-[20%] h-[9px] w-[57%] rounded-full bg-[#bcbcbc]" />
      </div>
      <div className="flex h-6 shrink-0 items-center">
        <button aria-label="填充颜色" className="flex w-[47px] justify-center text-[#434343]">
          <Bucket size={22} />
        </button>
        <div className="flex h-[22px] flex-1 gap-px bg-white">
          {palette.map((c) => (
            <button key={c} aria-label={c} className="flex-1" style={{ backgroundColor: c }} />
          ))}
        </div>
      </div>
    </main>
  );
}

/* ---------- tool strip ---------- */

const strip: { name: string; art: React.ReactNode }[] = [
  { name: "填充", art: <Bucket size={28} /> },
  { name: "主题", art: <Tiles /> },
  {
    name: "图片",
    art: (
      <Icon size={28} sw={2}>
        <rect x="1" y="2" width="22" height="19" rx="1" />
        <path d="M3 19L9.500 14L12.500 15.500L16 11.500L21.500 19Z" fill="#757575" stroke="none" />
        <rect x="5.500" y="6.500" width="2.500" height="2.500" fill="#757575" stroke="none" />
      </Icon>
    ),
  },
  {
    name: "图层",
    art: (
      <Icon size={28} sw={2.2}>
        <path d="M12 1.500L22.500 9L12 16.500L1.500 9Z" strokeLinejoin="round" />
        <path d="M1.500 14.500L12 22L22.500 14.500" strokeLinejoin="round" />
      </Icon>
    ),
  },
  {
    name: "备注",
    art: (
      <Icon size={28} sw={2.2}>
        <path d="M2.500 1.500H17L21.500 6V22.500H2.500Z" strokeLinejoin="round" />
        <path d="M16 1V7H22" {...fillStop} />
        <path d="M5.500 11.500H8M9.500 11.500H18M5.500 16.500H8M9.500 16.500H18" />
      </Icon>
    ),
  },
  {
    name: "图表",
    art: (
      <Icon size={28} sw={2.2}>
        <path d="M1.500 1V22.500H24" />
        <path d="M6 16L13 7.500L20 16" strokeWidth="1.400" />
        <circle cx="6.500" cy="16" r="2.400" {...fillStop} />
        <circle cx="13" cy="8" r="2.400" {...fillStop} />
        <circle cx="20.500" cy="16" r="2.400" {...fillStop} />
      </Icon>
    ),
  },
  {
    name: "表格",
    art: (
      <Icon size={28} sw={2.200}>
        <rect x="1.500" y="1.500" width="21" height="20" rx="2" />
        <path d="M2 8.500H22M2 15H22M8.500 9V21M15.500 9V21" />
      </Icon>
    ),
  },
  {
    name: "平面图",
    art: (
      <Icon size={28} sw={2.400}>
        <path d="M15.500 10V1.500H1.500V22H22.500V6H15.500M8 1.500V8.500H1.500M1.500 14.500H9V22M15.500 22V15" strokeLinejoin="round" />
      </Icon>
    ),
  },
  {
    name: "甘特图",
    art: (
      <Icon size={28}>
        <path d="M0.500 1H23.500V6L21.500 4.500H2.500L0.500 6Z" {...fillStop} />
        <rect x="3" y="9" width="10" height="4" rx="1" {...fillStop} />
        <rect x="11" y="18.500" width="12" height="4" rx="1" {...fillStop} />
        <path d="M13 11H19.500V19" strokeWidth="1.400" />
      </Icon>
    ),
  },
  {
    name: "思维导图",
    art: (
      <Icon size={28} sw={1.500}>
        <g {...fillStop}>
          <rect x="0.500" y="2" width="7" height="5.500" rx="1.500" />
          <rect x="16.500" y="2" width="7" height="5.500" rx="1.500" />
          <rect x="0.500" y="16.500" width="7" height="5.500" rx="1.500" />
          <rect x="16.500" y="16.500" width="7" height="5.500" rx="1.500" />
          <rect x="8.500" y="9.500" width="7" height="5" rx="1.500" />
        </g>
        <path d="M7 5Q9.500 5 9.500 8.500V15.500Q9.500 19 7 19M17 5Q14.500 5 14.500 8.500V15.500Q14.500 19 17 19" />
      </Icon>
    ),
  },
];

function ToolStrip() {
  return (
    <nav aria-label="工具面板" className="flex w-[52px] shrink-0 flex-col border-x border-[#cfcfcf] bg-[#f5f5f5] text-[#434343]">
      <button aria-label="展开" className="flex h-[47px] items-center justify-center text-[#757575]">
        <svg width="28" height="28" viewBox="0 0 28 28" fill="none" stroke="currentColor" strokeWidth="1.800">
          <path d="M1 1L13 14L1 27M14.500 1L26.500 14L14.500 27" />
        </svg>
      </button>
      <div className="flex flex-col gap-[15px]">
        {strip.map((s, i) => (
          <button
            key={s.name}
            aria-label={s.name}
            className={"flex h-[51px] items-center justify-center pb-[2px] " + (i === 1 ? "bg-[#0080ff] text-white" : "")}
          >
            {s.art}
          </button>
        ))}
      </div>
    </nav>
  );
}

/* ---------- theme panel ---------- */

type Theme = {
  d: [string, string, number];
  p: [string, string, number];
  r: [string, string, number];
  a: [string, number];
  c: [string, number];
  square?: boolean;
  slim?: boolean;
};

const themes: Theme[] = [
  { d: ["#fff", "#0d4a66", 1], p: ["#fff", "#6e5217", 1], r: ["#fff", "#6e6e6e", 1.5], a: ["#003f5e", 1.3], c: ["#3b3b3b", 1.3], square: true },
  { d: ["#6a81a4", "#6a81a4", 0], p: ["#d9b985", "#d9b985", 0], r: ["#85abbd", "#85abbd", 0], a: ["#45566e", 1.3], c: ["#597686", 1.3] },
  { d: ["#f0edf9", "#8d84cc", 2.6], p: ["#ecf1fa", "#6f9bc8", 1.6], r: ["#ebeef9", "#6a82c4", 2.6], a: ["#6b60a0", 3], c: ["#4a5f98", 2.6] },
  { d: ["#9dcab7", "#76a592", 1], p: ["#a9cbd5", "#7ba0ac", 1], r: ["#98b698", "#7d9f7e", 1], a: ["#668a7b", 1.1], c: ["#65836a", 1.1], slim: true },
  { d: ["#fff", "#5274b4", 2.4], p: ["#fff", "#c9788c", 2], r: ["#fff", "#5274b4", 2], a: ["#5274b4", 2], c: ["#5274b4", 2] },
  { d: ["#2a9ad2", "#2a9ad2", 0], p: ["#f0a030", "#f0a030", 0], r: ["#2a9ad2", "#2a9ad2", 0], a: ["#2a9ad2", 2], c: ["#2a9ad2", 2] },
];

const diamond = "M55.500 28.500Q59 26 62.500 28.500L84 41.500Q87 43.700 84 46L62.500 59Q59 61 55.500 59L33.500 46Q30.500 43.700 33.500 41.500Z";
const slant = "M122 52.500H156Q160.500 52.500 159 56.500L150.500 77Q149 81.500 145 81.500H107Q104.500 81.500 105.500 78.500L114.500 57Q116.500 52.500 122 52.500Z";

function ThemeArt({ t }: { t: Theme }) {
  const k = t.slim ? 2.6 : 4.5;
  const h = t.slim ? 11 : 8;
  return (
    <svg width="178" height="145" viewBox="1 1 178 145" aria-hidden="true" className="shrink-0">
      <path d={diamond} fill={t.d[0]} stroke={t.d[1]} strokeWidth={t.d[2]} />
      <path d={slant} fill={t.p[0]} stroke={t.p[1]} strokeWidth={t.p[2]} />
      <path d="M59 61V88" stroke={t.a[0]} strokeWidth={t.a[1]} />
      <path d={`M59 95L${59 - k} ${94 - h}L59 ${96 - h}L${59 + k} ${94 - h}Z`} fill={t.a[0]} stroke={t.a[0]} strokeWidth={t.a[1] - 1} />
      <path d={t.square ? "M81 109H132V88" : "M81 109H126Q132 109 132 102V88"} fill="none" stroke={t.c[0]} strokeWidth={t.c[1]} />
      <path d={`M132 82L${132 - k} ${82 + h}H${132 + k}Z`} fill={t.c[0]} stroke={t.c[0]} strokeWidth={t.c[1] - 1} />
      <rect x="35.500" y="94.500" width="46" height="29" rx="5" fill={t.r[0]} stroke={t.r[1]} strokeWidth={t.r[2]} />
    </svg>
  );
}

function ThemePanel() {
  const harmony = ["#55605c", "#55905b", "#4f92e0", "#b54264", "#f5792d", "#7d6190"];
  const settings: { label: string; art: React.ReactNode }[] = [
    {
      label: "和谐",
      art: (
        <span className="grid grid-cols-3 gap-px bg-white p-[2px]">
          {harmony.map((c) => (
            <span key={c} className="h-[10px] w-2" style={{ backgroundColor: c }} />
          ))}
        </span>
      ),
    },
    { label: "宋体", art: <Aa /> },
    { label: "圆角箭头", art: <Connector arrow /> },
    {
      label: "保存主题",
      art: (
        <Icon size={26} sw={2.400}>
          <path d="M1.500 1.500H17.500L22.500 6.500V22.500H1.500Z" strokeLinejoin="round" />
          <path d="M8 2V9.500H15.500V2" />
        </Icon>
      ),
    },
  ];
  const tabs: { label: string; art: React.ReactNode }[] = [
    { label: "主题", art: <Tiles size={28} /> },
    {
      label: "颜色",
      art: (
        <svg width="30" height="26" viewBox="0 0 30 26" aria-hidden="true">
          <rect x="1.200" y="1.200" width="27.600" height="23.600" rx="1" fill="none" stroke="#434343" strokeWidth="2.400" />
          {[0, 1, 2, 3, 4, 5].map((i) => (
            <rect key={i} x={5 + (i % 3) * 7} y={5 + Math.floor(i / 3) * 8.5} width="6" height="7.500" fill="#757575" />
          ))}
        </svg>
      ),
    },
    { label: "连接线", art: <Connector arrow /> },
    { label: "文本", art: <Aa /> },
  ];
  return (
    <aside className="flex w-[423px] shrink-0 flex-col bg-[#f5f5f5]">
      <h2 className="flex h-[47px] shrink-0 items-center justify-center bg-[#dfdfdf] text-xl leading-none font-bold text-black">主题</h2>
      <div className="flex min-h-0 flex-1">
        <div className="min-w-0 flex-1 overflow-hidden pt-[23px] pl-[22px]">
          <div className="flex">
            <div className="h-48 w-[195px] border border-[#dcdcdc] bg-white">
              <svg width="193" height="190" viewBox="1 1 193 190" role="img" aria-label="主题预览">
                <path d="M50 37Q55.500 34 61 37L88 53Q94 57 88 61L61 77Q55.500 81 50 77L23 61Q17 57 23 53Z" fill="#6a81a4" />
                <path d="M139 69H184Q191 69 188.500 75L178 101Q175.500 107 169 107H122Q117 107 118.500 102L129 76Q132 69 139 69Z" fill="#d9b985" />
                <path d="M55.500 79V117" stroke="#45566e" strokeWidth="2" />
                <path d="M55.500 124L50 115L55.500 117L61 115Z" fill="#45566e" />
                <path d="M86 144H97M151 144Q153.500 144 153.500 141V114" stroke="#55707e" strokeWidth="2" fill="none" />
                <path d="M153.500 107L148 116H159Z" fill="#55707e" />
                <rect x="25" y="124" width="62" height="39" rx="6" fill="#85abbd" />
                <g textAnchor="middle" fill="#fff" className="font-['DejaVu_Sans_Mono'] text-lg">
                  <text x="56" y="63">text</text>
                  <text x="153" y="94">text</text>
                  <text x="56" y="150">text</text>
                  <text x="124" y="151" fill="#4a4a4a" className="text-[22px]">text</text>
                </g>
              </svg>
            </div>
            <div className="flex flex-col">
              {settings.map((s) => (
                <button key={s.label} className="ml-[47px] flex h-12 items-center text-lg leading-none text-[#111]">
                  <span className="flex w-8 justify-center text-[#434343]">{s.art}</span>
                  <span className="ml-4">{s.label}</span>
                </button>
              ))}
            </div>
          </div>
          <div role="tablist" className="mt-[23px] grid w-[374px] grid-cols-4">
            {tabs.map((t, i) => (
              <button
                role="tab"
                aria-selected={i === 0}
                key={t.label}
                className={"flex h-[90px] flex-col items-center text-lg leading-none text-black " + (i === 0 ? "bg-[#dfdfdf]" : "")}
              >
                <span className="flex h-[46px] items-center text-[#434343]">{t.art}</span>
                <span className="pt-[9px]">{t.label}</span>
              </button>
            ))}
          </div>
          <div className="mt-[29px] grid w-[367px] grid-cols-2 gap-[7px]">
            {themes.map((t, i) => (
              <button
                key={t.d[0] + t.d[1]}
                aria-label={"主题 " + (i + 1)}
                className={
                  "flex h-[147px] w-[180px] items-center justify-center overflow-hidden bg-white " +
                  (i === 1 ? "border-[3px] border-[#dcdcdc]" : "border border-[#dcdcdc]")
                }
              >
                <ThemeArt t={t} />
              </button>
            ))}
          </div>
        </div>
        <div className="w-2 bg-[#ececec]">
          <div className="h-80 rounded-full bg-[#d4d4d4]" />
        </div>
      </div>
    </aside>
  );
}

/* ---------- status bar ---------- */

function StatusBar() {
  return (
    <footer className="shrink-0">
      <div className="flex h-[51px] items-center border-y border-[#dcdcdc] bg-[#f5f5f5] pr-[43px] pb-px text-lg leading-none text-[#111]">
        <div className="flex w-[254px] items-center self-stretch pl-[26px]">
          <button aria-label="页面缩略图">
            <svg width="34" height="20" viewBox="0 0 34 20" fill="none" aria-hidden="true">
              <rect x="8" y="2" width="18" height="15" rx="1" stroke="#434343" strokeWidth="3" />
              <path d="M1.500 1V18M32.500 1V18" stroke="#757575" strokeWidth="3" />
            </svg>
          </button>
          <button className="ml-[35px] flex flex-1 items-center justify-between">
            页-1
            <span className="pr-[3px]">
              <Caret w={11} h={8} />
            </span>
          </button>
        </div>
        <div className="h-9 w-px bg-[#dcdcdc]" />
        <button className="ml-10 font-bold text-black">页-1</button>
        <button aria-label="添加页" className="ml-[53px] text-[#434343]">
          <Icon size={16} sw={4}>
            <path d="M12 0V24M0 12H24" />
          </Icon>
        </button>
        <span className="ml-auto">形状 ID：103</span>
        <button aria-label="播放" className="ml-[26px] text-[#434343]">
          <Icon size={26} sw={2.200}>
            <circle cx="12" cy="12" r="10.800" />
            <path d="M9 6.500L18 12L9 17.500Z" fill="#757575" stroke="none" />
          </Icon>
        </button>
        <button aria-label="缩小" className="ml-[15px] flex h-6 w-4 items-center">
          <span className="h-[3px] w-4 bg-[#434343]" />
        </button>
        <input
          type="range"
          aria-label="缩放"
          min={0}
          max={100}
          defaultValue={14}
          className="ml-[10px] h-[6px] w-[123px] appearance-none rounded-full bg-[linear-gradient(to_right,#b9b9b9_18%,#dedede_18%)] [&::-webkit-slider-thumb]:h-[18px] [&::-webkit-slider-thumb]:w-[18px] [&::-webkit-slider-thumb]:appearance-none [&::-webkit-slider-thumb]:rounded-full [&::-webkit-slider-thumb]:border-[3px] [&::-webkit-slider-thumb]:border-[#bdbdbd] [&::-webkit-slider-thumb]:bg-white"
        />
        <button aria-label="放大" className="ml-[11px] text-[#434343]">
          <Icon size={15} sw={4}>
            <path d="M12 0V24M0 12H24" />
          </Icon>
        </button>
        <button className="ml-[22px] flex items-center gap-[14px]">
          62%
          <Caret />
        </button>
        <button aria-label="全屏" className="ml-[27px] text-[#434343]">
          <Icon size={24} sw={2.800}>
            <path d="M2 8V2H8M16 2H22V8M22 16V22H16M8 22H2V16" />
          </Icon>
        </button>
        <button aria-label="适合宽度" className="ml-[10px] text-[#434343]">
          <Icon size={24} sw={2.400}>
            <rect x="1.200" y="1.200" width="21.600" height="21.600" rx="1" />
            <path d="M6 12H18M9 8.500L5.500 12L9 15.500M15 8.500L18.500 12L15 15.500" strokeWidth="2" />
          </Icon>
        </button>
      </div>
      <div className="flex h-[2px] bg-[#1d262b]">
        <div className="ml-[72px] w-[516px] bg-[#bdbdbd]" />
        <div className="ml-[401px] w-[66px] bg-[#5c5f61]" />
      </div>
    </footer>
  );
}

export default function App() {
  return (
    <div className="flex h-screen w-full -scale-x-100 flex-col overflow-hidden bg-[#f5f5f5] font-['Noto_Sans_CJK_SC','Noto_Sans',sans-serif]">
      <TitleBar />
      <Ribbon />
      <div className="flex min-h-0 flex-1">
        <SymbolPanel />
        <Workspace />
        <ToolStrip />
        <ThemePanel />
      </div>
      <StatusBar />
    </div>
  );
}
